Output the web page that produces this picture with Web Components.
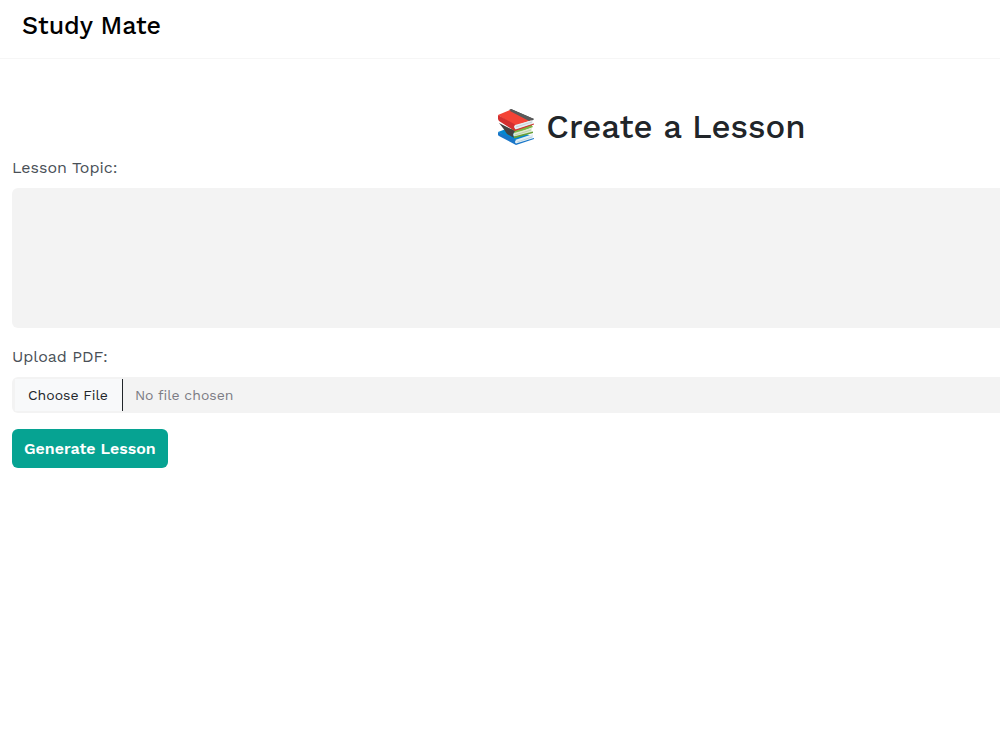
<!DOCTYPE html>
<html lang="en">
<head>
<meta charset="utf-8">
<meta name="viewport" content="width=device-width, initial-scale=1">
<title>Study Mate</title>
<style>
  body { margin: 0; background: #fff; color: #212529; font-family: "Work Sans", Inter, sans-serif; font-size: 16px; line-height: 24px; }
</style>
</head>
<body>
<study-app>
  <site-header>Study Mate</site-header>
  <lesson-form></lesson-form>
</study-app>
<script>
const attach = (host, html) => {
  const t = document.createElement('template');
  t.innerHTML = html;
  host.attachShadow({ mode: 'open' }).append(t.content.cloneNode(true));
};

customElements.define('study-app', class extends HTMLElement {
  constructor() {
    super();
    attach(this, `<style>
      :host { display: block; overflow-x: clip; }
      .page { min-width: 1304px; }
    </style>
    <div class="page"><slot></slot></div>`);
  }
});

customElements.define('site-header', class extends HTMLElement {
  constructor() {
    super();
    attach(this, `<style>
      :host { display: block; padding: 12px 22px; border-bottom: 1px solid #f6f6f6; }
      header { display: flex; min-height: 34px; }
      a { font-size: 25px; line-height: 28px; font-weight: 500; color: #000; text-decoration: none; }
    </style>
    <header><a href="#"><slot></slot></a></header>`);
  }
});

customElements.define('book-stack', class extends HTMLElement {
  constructor() {
    super();
    attach(this, `<style>
      :host { display: block; width: 36px; height: 36px; }
      svg { display: block; width: 100%; height: 100%; }
    </style>
    <svg viewBox="0 0 36 36" aria-hidden="true">
      <path fill="#0288d1" d="M0 23 8 20 35 27 18 33z"/>
      <path fill="#e1eef4" d="M17 31 35 25Q34 28 35 30L18 35Q16 33 17 31z"/>
      <path fill="#1976c8" d="M0 23Q-1 26 1 27L18 36 36 30V29L18 34.5Q16 33 18 31z"/>
      <path stroke="#9ebccb" stroke-width=".5" fill="none" d="M19 33 34 28"/>
      <path fill="#7cb342" d="M12 20 33 15 35 18 17 25z"/>
      <path fill="#424242" d="M1 14 17 22Q14 25 16 29L9 25Q6 20 1 14z"/>
      <path fill="#dcebd0" d="M16 24 34 19Q33 21 34 23L17 28Q14 26 16 24z"/>
      <path fill="#689f38" d="M16 27.5 35 22.5V24L16 29.5z"/>
      <path stroke="#9fb191" stroke-width=".5" fill="none" d="M17 26 33 21"/>
      <path fill="#484848" d="M13 0 36 10 34 12 11 1z"/>
      <path fill="#f44336" d="M0 6 12 1 34 11 17 17z"/>
      <path fill="#5a5a5a" d="M13 0 36 10 31 12 12 2z"/>
      <path fill="#e5eef2" d="M17 16 35 11Q34 13 35 15L18 21Q15 19 17 16z"/>
      <path fill="#d32f2f" d="M0 6 17 15.5Q15 18 17.5 20.5L36 14.5V15.5L17 22 1 12Q-1 9 0 6z"/>
      <path stroke="#a4b3b9" stroke-width=".5" fill="none" d="M18 18 34 13"/>
    </svg>`);
  }
});

customElements.define('lesson-form', class extends HTMLElement {
  constructor() {
    super();
    attach(this, `<style>
      :host { display: block; padding: 48px 12px; }
      h1 { display: flex; justify-content: center; align-items: center; gap: 12px; margin: 0; font-size: 33px; line-height: 40px; font-weight: 500; }
      form { display: flex; flex-direction: column; align-items: flex-start; gap: 16px; margin-top: 8px; }
      .field { display: flex; flex-direction: column; align-items: stretch; gap: 8px; width: 100%; }
      label { font-size: 16px; line-height: 25px; color: #495057; }
      textarea, input { display: block; box-sizing: border-box; width: 100%; margin: 0; border: 0; border-radius: 6px; background: #f3f3f3; font: inherit; color: #7b7b84; }
      textarea { height: 140px; padding: 8px 12px; resize: none; color: #212529; }
      input { height: 36px; padding: 2px 3px; font-size: 14px; line-height: 32px; }
      input::file-selector-button { box-sizing: border-box; height: 32px; margin: 0 12px 0 0; padding: 0 14px 0 13px; border: 0; border-right: 1px solid #212529; background: #f8f9fa; font: inherit; color: #212529; }
      button { box-sizing: border-box; height: 39px; padding: 0 12px; border: 0; border-radius: 6px; background: #06a392; color: #fff; font: inherit; font-weight: 600; }
    </style>
    <main>
      <h1><book-stack></book-stack><span>Create a Lesson</span></h1>
      <form>
        <div class="field"><label for="topic">Lesson Topic:</label><textarea id="topic"></textarea></div>
        <div class="field"><label for="pdf">Upload PDF:</label><input id="pdf" type="file" accept="application/pdf"></div>
        <button type="button">Generate Lesson</button>
      </form>
    </main>`);
  }
});
</script>
</body>
</html>
